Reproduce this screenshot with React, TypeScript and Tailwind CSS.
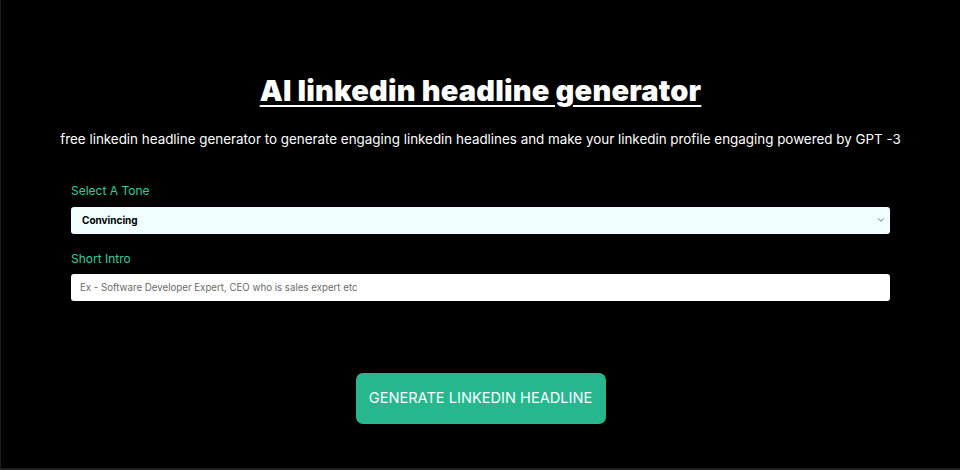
import { ChevronDown } from 'lucide-react'

const tones = ['Convincing', 'Professional', 'Friendly', 'Funny', 'Creative']

const App = () => {
  return (
    <div
      className="w-[960px] h-[470px] bg-black border-l border-[#1c1c1c] border-b-2 border-b-[#1e1e1e] flex flex-col items-center"
      style={{ fontFamily: 'Inter, "Noto Sans", sans-serif' }}
    >
      <h1 className="mt-[73px] text-[29px] leading-[36px] font-black text-white underline underline-offset-[4px] decoration-[2px] tracking-[0.2px]">
        AI linkedin headline generator
      </h1>
      <p className="mt-[20px] text-[13.4px] leading-[20px] text-white">
        free linkedin headline generator to generate engaging linkedin headlines and make your linkedin profile engaging powered by GPT -3
      </p>

      <div className="w-[819px] mt-[34px] flex flex-col">
        <label className="text-[12px] leading-[16px] text-[#2fcf9c]">Select A Tone</label>
        <div className="relative mt-[7px]">
          <select
            defaultValue="Convincing"
            className="w-full h-[27px] appearance-none rounded-[3px] bg-[#f0feff] pl-[11px] text-[10px] font-bold text-black outline-none"
          >
            {tones.map((t) => (
              <option key={t}>{t}</option>
            ))}
          </select>
          <ChevronDown
            size={10}
            strokeWidth={2}
            className="absolute right-[4px] top-[9px] text-[#555] pointer-events-none"
          />
        </div>

        <label className="mt-[17px] text-[12px] leading-[16px] text-[#2fcf9c]">Short Intro</label>
        <input
          placeholder="Ex - Software Developer Expert, CEO who is sales expert etc"
          className="mt-[7px] w-full h-[27px] rounded-[3px] bg-white px-[9px] text-[9.7px] text-black placeholder:text-[#6b6b6b] outline-none"
        />
      </div>

      <button className="mt-[72px] w-[250px] h-[51px] rounded-[7px] bg-[#26b78e] text-white text-[14.6px]">
        GENERATE LINKEDIN HEADLINE
      </button>
    </div>
  )
}

export default App
